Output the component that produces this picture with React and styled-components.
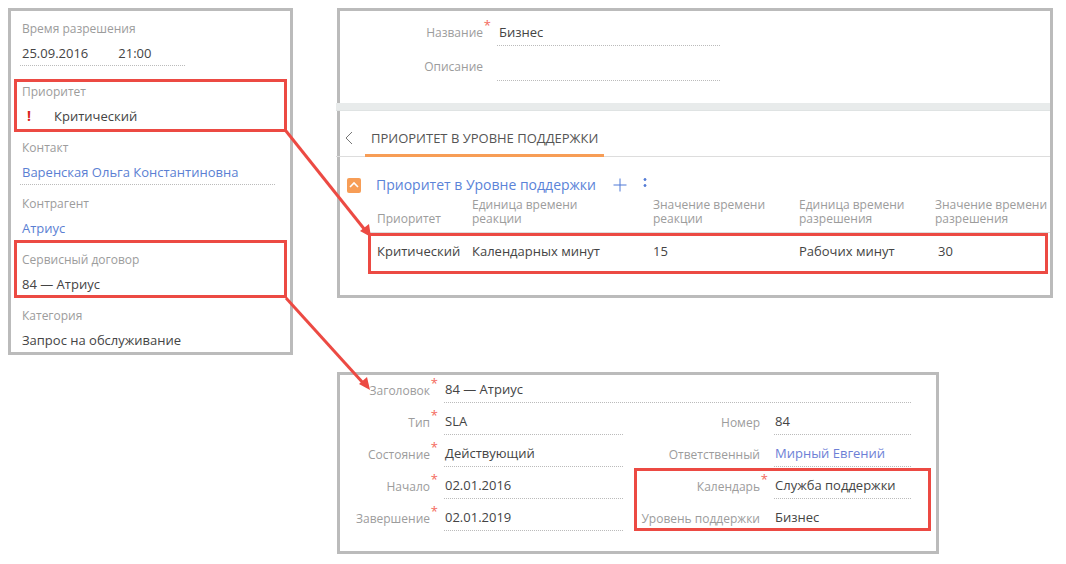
import React from 'react'
import styled, { createGlobalStyle } from 'styled-components'

const GlobalStyle = createGlobalStyle`
  html, body {
    margin: 0;
    padding: 0;
    background: #fff;
  }
`

const Canvas = styled.div`
  position: relative;
  box-sizing: border-box;
  width: 1066px;
  height: 564px;
  padding: 8px;
  display: grid;
  grid-template-columns: 285px 716px;
  column-gap: 44px;
  align-items: start;
  font-family: 'Open Sans', sans-serif;
  font-size: 13px;
  line-height: 16px;
  color: #444;
  overflow: hidden;
`

const RightColumn = styled.div`
  display: flex;
  flex-direction: column;
  align-items: flex-start;
  gap: 74px;
`

const Panel = styled.section`
  box-sizing: border-box;
  width: ${props => props.$width}px;
  height: ${props => props.$height}px;
  border: 3px solid #bbb;
  background: #fff;
`

/* left card */
const SideList = styled.div`
  padding: 9px 0 0 9px;
`

const SideField = styled.div`
  height: ${props => props.$height || 56}px;
`

const SideLabel = styled.div`
  padding: 1px 0 0 2px;
  font-size: 12px;
  color: #9c9c9c;
`

const SideValue = styled.div`
  box-sizing: border-box;
  display: flex;
  align-items: center;
  margin-top: 7px;
  padding: 0 0 ${props => (props.$line ? 3 : 5)}px 2px;
  height: 22px;
  width: ${props => props.$line || 255}px;
  border-bottom: ${props => (props.$line ? '1px dotted #bbb' : 'none')};
  color: ${props => (props.$link ? '#5b7fd3' : '#444')};
`

const TimeText = styled.span`
  margin-left: 30px;
`

const Bang = styled.span`
  width: 32px;
  padding-left: 5px;
  box-sizing: border-box;
  color: #d9251c;
  font-size: 14px;
  font-weight: 700;
`

/* form rows */
const TopForm = styled.div`
  height: 92px;
  padding-top: 11px;
  box-sizing: border-box;
`

const FormRow = styled.div`
  display: grid;
  grid-template-columns: ${props => props.$labelWidth}px auto;
  column-gap: 14px;
  height: ${props => props.$height || 32}px;
`

const FormLabel = styled.div`
  position: relative;
  text-align: right;
  padding-top: 3px;
  font-size: 12px;
  color: #9c9c9c;
  white-space: nowrap;
  height: 16px;

  ${props =>
    props.$required &&
    `&::after {
      content: '*';
      position: absolute;
      right: -8px;
      top: -5px;
      color: #f4695c;
      font-size: 13px;
    }`}
`

const FormValue = styled.div`
  box-sizing: border-box;
  height: ${props => props.$h || 23}px;
  width: ${props => props.$line}px;
  padding: ${props => (props.$flush ? '1px 0 0 1px' : '2px 0 0 2px')};
  border-bottom: ${props => (props.$plain ? 'none' : '1px dotted #bbb')};
  color: ${props => (props.$link ? '#6d7fd6' : '#444')};
  white-space: nowrap;
`

const Band = styled.div`
  position: relative;
  box-sizing: border-box;
  height: 8px;
  margin-left: -4px;
  background: #e8ebeb;
  border-bottom: 1px solid #dfe3e3;
`

const TabBar = styled.div`
  position: relative;
  display: flex;
  align-items: center;
  height: 46px;
  margin: -1px 0 0 -4px;
  border-bottom: 1px solid #ddd;
`

const BackIcon = styled.svg`
  width: 8px;
  height: 14px;
  margin: 10px 0 0 9px;
  fill: none;
  stroke: #777;
  stroke-width: 1;
`

const Tab = styled.div`
  box-sizing: border-box;
  align-self: flex-end;
  height: 33px;
  margin: 0 0 -1px 12px;
  padding: 0 6px;
  line-height: 28px;
  color: #555;
  white-space: nowrap;
  border-bottom: 3px solid #f79d56;
`

const GroupHead = styled.div`
  display: flex;
  align-items: center;
  height: 18px;
  margin-top: 19px;
  padding-left: 7px;
`

const Toggle = styled.div`
  display: flex;
  align-items: center;
  justify-content: center;
  width: 14px;
  height: 15px;
  border-radius: 2px;
  background: #f79d56;
`

const ToggleIcon = styled.svg`
  width: 10px;
  height: 8px;
  fill: none;
  stroke: #fff;
  stroke-width: 1.6;
`

const GroupTitle = styled.div`
  margin-left: 15px;
  font-size: 14px;
  color: #5b83d8;
  white-space: nowrap;
`

const ActionIcon = styled.svg`
  margin-left: ${props => props.$gap}px;
  width: ${props => props.$w}px;
  height: 16px;
  fill: #4f78d6;
  stroke: #4f78d6;
  stroke-width: 1;
`

const DetailGrid = styled.div`
  display: grid;
  grid-template-columns: 95px 181px 146px 136px 114px;
`

const HeadRow = styled(DetailGrid)`
  margin: 4px 0 0 29px;
  padding: 0 0 6px 8px;
  height: 28px;
  align-items: end;
  border-bottom: 1px solid #ddd;
  line-height: 14px;
  color: #9c9c9c;
  font-size: 12px;
`

const HeadCell = styled.div`
  white-space: pre;
`

const DataRow = styled(DetailGrid)`
  margin-top: 10px;
  padding-left: 37px;
`

const DataCell = styled.div`
  white-space: nowrap;
  padding-left: ${props => props.$indent || 0}px;
`

/* bottom card */
const ContractForm = styled.div`
  padding-top: 5px;
`

const TwoColumns = styled.div`
  display: flex;
`

const Column = styled.div`
  display: flex;
  flex-direction: column;
`

/* overlays */
const Highlight = styled.div`
  position: absolute;
  box-sizing: border-box;
  left: ${props => props.$x}px;
  top: ${props => props.$y}px;
  width: ${props => props.$w}px;
  height: ${props => props.$h}px;
  border: 3px solid #ec4a43;
  pointer-events: none;
`

const ArrowLayer = styled.svg`
  position: absolute;
  left: 0;
  top: 0;
  width: 1066px;
  height: 564px;
  pointer-events: none;
`

const Arrow = ({ d, head }) => (
  <>
    <path d={d} fill='none' stroke='#ec4a43' strokeWidth='3' />
    <polygon points={head} fill='#ec4a43' />
  </>
)

const contractLeft = [
  ['Тип', 'SLA'],
  ['Состояние', 'Действующий'],
  ['Начало', '02.01.2016'],
  ['Завершение', '02.01.2019']
]

const App = () => (
  <Canvas>
    <GlobalStyle />

    <Panel $width={285} $height={347}>
      <SideList>
        <SideField $height={63}>
          <SideLabel>Время разрешения</SideLabel>
          <SideValue $line={165}>
            25.09.2016<TimeText>21:00</TimeText>
          </SideValue>
        </SideField>
        <SideField>
          <SideLabel>Приоритет</SideLabel>
          <SideValue>
            <Bang>!</Bang>Критический
          </SideValue>
        </SideField>
        <SideField>
          <SideLabel>Контакт</SideLabel>
          <SideValue $line={255} $link>
            Варенская Ольга Константиновна
          </SideValue>
        </SideField>
        <SideField>
          <SideLabel>Контрагент</SideLabel>
          <SideValue $link>Атриус</SideValue>
        </SideField>
        <SideField>
          <SideLabel>Сервисный договор</SideLabel>
          <SideValue>84 — Атриус</SideValue>
        </SideField>
        <SideField>
          <SideLabel>Категория</SideLabel>
          <SideValue>Запрос на обслуживание</SideValue>
        </SideField>
      </SideList>
    </Panel>

    <RightColumn>
      <Panel $width={716} $height={290}>
        <TopForm>
          <FormRow $labelWidth={143} $height={34}>
            <FormLabel $required>Название</FormLabel>
            <FormValue $line={223} $h={24}>
              Бизнес
            </FormValue>
          </FormRow>
          <FormRow $labelWidth={143}>
            <FormLabel>Описание</FormLabel>
            <FormValue $line={223} $h={25} />
          </FormRow>
        </TopForm>
        <Band />
        <TabBar>
          <BackIcon viewBox='0 0 8 14'>
            <path d='M7 1 L1 7 L7 13' />
          </BackIcon>
          <Tab>ПРИОРИТЕТ В УРОВНЕ ПОДДЕРЖКИ</Tab>
        </TabBar>
        <GroupHead>
          <Toggle>
            <ToggleIcon viewBox='0 0 10 8'>
              <path d='M1 6 L5 2 L9 6' />
            </ToggleIcon>
          </Toggle>
          <GroupTitle>Приоритет в Уровне поддержки</GroupTitle>
          <ActionIcon $gap={17} $w={14} viewBox='0 0 14 16'>
            <path d='M7 1.5 V14.5 M0.5 8 H13.5' fill='none' />
          </ActionIcon>
          <ActionIcon $gap={16} $w={4} viewBox='0 0 4 16'>
            <circle cx='2' cy='2.5' r='1' />
            <circle cx='2' cy='8.5' r='1' />
          </ActionIcon>
        </GroupHead>
        <HeadRow>
          <HeadCell>Приоритет</HeadCell>
          <HeadCell>{'Единица времени\nреакции'}</HeadCell>
          <HeadCell>{'Значение времени\nреакции'}</HeadCell>
          <HeadCell>{'Единица времени\nразрешения'}</HeadCell>
          <HeadCell>{'Значение времени\nразрешения'}</HeadCell>
        </HeadRow>
        <DataRow>
          <DataCell>Критический</DataCell>
          <DataCell>Календарных минут</DataCell>
          <DataCell>15</DataCell>
          <DataCell>Рабочих минут</DataCell>
          <DataCell $indent={3}>30</DataCell>
        </DataRow>
      </Panel>

      <Panel $width={602} $height={182}>
        <ContractForm>
          <FormRow $labelWidth={90}>
            <FormLabel $required>Заголовок</FormLabel>
            <FormValue $line={467} $flush>
              84 — Атриус
            </FormValue>
          </FormRow>
          <TwoColumns>
            <Column>
              {contractLeft.map(([label, value]) => (
                <FormRow $labelWidth={90} key={label}>
                  <FormLabel $required>{label}</FormLabel>
                  <FormValue $line={179} $flush>
                    {value}
                  </FormValue>
                </FormRow>
              ))}
            </Column>
            <Column>
              <FormRow $labelWidth={137}>
                <FormLabel>Номер</FormLabel>
                <FormValue $line={137} $flush>
                  84
                </FormValue>
              </FormRow>
              <FormRow $labelWidth={137}>
                <FormLabel>Ответственный</FormLabel>
                <FormValue $line={137} $link $flush>
                  Мирный Евгений
                </FormValue>
              </FormRow>
              <FormRow $labelWidth={137}>
                <FormLabel $required>Календарь</FormLabel>
                <FormValue $line={137} $flush>
                  Служба поддержки
                </FormValue>
              </FormRow>
              <FormRow $labelWidth={137}>
                <FormLabel>Уровень поддержки</FormLabel>
                <FormValue $line={137} $plain $flush>
                  Бизнес
                </FormValue>
              </FormRow>
            </Column>
          </TwoColumns>
        </ContractForm>
      </Panel>
    </RightColumn>

    <Highlight $x={14} $y={79} $w={273} $h={53} />
    <Highlight $x={14} $y={240} $w={273} $h={58} />
    <Highlight $x={368} $y={233} $w={680} $h={41} />
    <Highlight $x={634} $y={468} $w={297} $h={63} />

    <ArrowLayer viewBox='0 0 1066 564'>
      <Arrow d='M286 131 L365 230' head='371,237 360,231 369,224' />
      <Arrow d='M286 298 L364 384' head='370,390 359,384 367,377' />
    </ArrowLayer>
  </Canvas>
)

export default App
